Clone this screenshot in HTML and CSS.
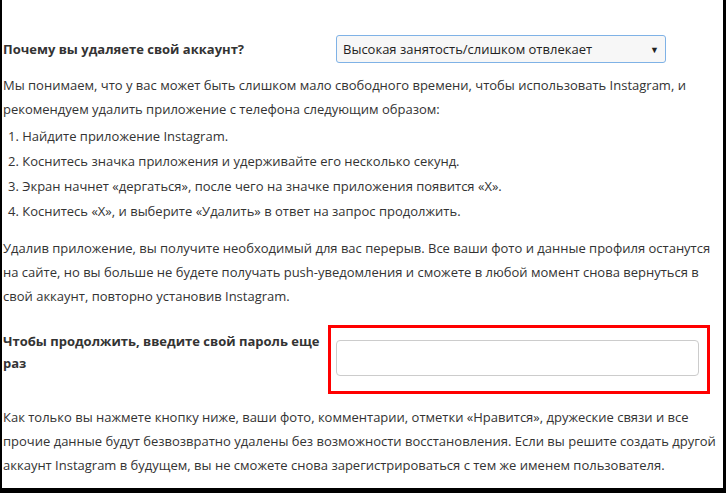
FILE: index.html
```html
<!DOCTYPE html>
<html lang="ru">
<head>
    <meta charset="UTF-8">
    <meta name="viewport" content="width=device-width, initial-scale=1.0">
    <title>Удаление аккаунта</title>
    <link rel="stylesheet" href="styles.css">
</head>
<body>
  <main class="page">
    <div class="form-row reason">
      <label class="form-label" for="reason">Почему вы удаляете свой аккаунт?</label>
      <div class="select-box" id="reason">
        <span>Высокая занятость/слишком отвлекает</span>
        <span class="arrow">&#9660;</span>
      </div>
    </div>

    <p class="intro">Мы понимаем, что у вас может быть слишком мало свободного времени, чтобы использовать Instagram, и рекомендуем удалить приложение с телефона следующим образом:</p>

    <ol class="steps">
      <li>Найдите приложение Instagram.</li>
      <li>Коснитесь значка приложения и удерживайте его несколько секунд.</li>
      <li>Экран начнет «дергаться», после чего на значке приложения появится «X».</li>
      <li>Коснитесь «X», и выберите «Удалить» в ответ на запрос продолжить.</li>
    </ol>

    <p class="note">Удалив приложение, вы получите необходимый для вас перерыв. Все ваши фото и данные профиля останутся на сайте, но вы больше не будете получать push-уведомления и сможете в любой момент снова вернуться в свой аккаунт, повторно установив Instagram.</p>

    <div class="form-row password">
      <label class="form-label" for="pass">Чтобы продолжить, введите свой пароль еще раз</label>
      <div class="highlight">
        <input type="password" id="pass" class="text-input">
      </div>
    </div>

    <p class="warning">Как только вы нажмете кнопку ниже, ваши фото, комментарии, отметки «Нравится», дружеские связи и все прочие данные будут безвозвратно удалены без возможности восстановления. Если вы решите создать другой аккаунт Instagram в будущем, вы не сможете снова зарегистрироваться с тем же именем пользователя.</p>
  </main>
</body>
</html>
```

FILE: styles.css
```css
* {
box-sizing: border-box;
}

body {
margin: 0;
background-color: #000;
font-family: 'Open Sans', 'Noto Sans', sans-serif;
font-size: 13px;
color: #333;
}

.page {
background-color: #fff;
margin: 0 3px 0 2px;
height: 488px;
padding: 35px 0 0 1px;
overflow: hidden;
}

.form-row {
display: grid;
grid-template-columns: 325px 382px;
}

.form-label {
font-weight: bold;
}

.reason {
grid-template-columns: 333px 330px;
align-items: center;
}

.select-box {
display: flex;
justify-content: space-between;
align-items: center;
height: 28px;
padding: 0 6px;
border: 1px solid #7fb2e6;
border-radius: 3px;
background-color: #f7f7f7;
color: #222;
}

.arrow {
font-size: 9px;
}

p {
margin: 0;
line-height: 24px;
}

.intro {
margin-top: 10px;
}

.steps {
margin: 3px 0 0;
padding-left: 5px;
list-style-position: inside;
line-height: 25px;
}

.note {
margin-top: 12px;
}

.password {
margin-top: 17px;
}

.password .form-label {
padding-top: 5px;
line-height: 22px;
}

.highlight {
border: 3px solid #f00;
height: 69px;
padding: 12px 8px 0 5px;
}

.text-input {
display: block;
width: 100%;
height: 36px;
border: 1px solid #ccc;
border-radius: 4px;
}

.warning {
margin-top: 11px;
}
```
